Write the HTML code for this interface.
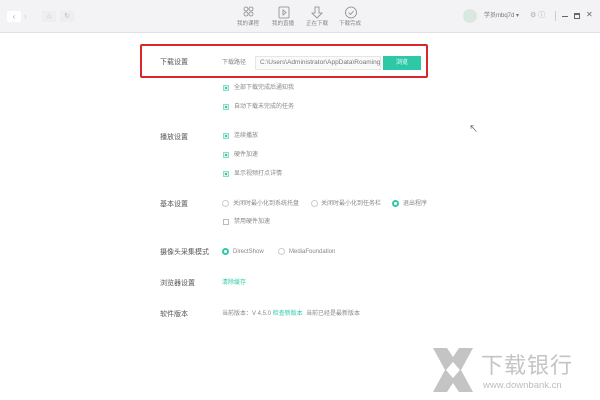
<!DOCTYPE html>
<html><head><meta charset="utf-8"><style>
*{margin:0;padding:0;box-sizing:border-box}
body{width:600px;height:400px;background:#fff;position:relative;overflow:hidden;font-family:"Liberation Sans","Noto Sans CJK SC",sans-serif;color:#666}
.a{position:absolute;white-space:nowrap}
.hdr{position:absolute;left:0;top:0;width:600px;height:33px;background:#f3f3f5;border-bottom:1px solid #e2e2e4}
.s{font-size:6px;color:#888;line-height:8px}
.lab{font-size:7px;color:#555;line-height:9px}
.cb{position:absolute;width:6px;height:6px;background:#d6f3ee;border:1px solid #8ddccb}
.cb::after{content:"";position:absolute;left:1px;top:1px;width:2px;height:2px;background:#2dc9a7}
.rd{position:absolute;width:7px;height:7px;border-radius:50%;border:1px solid #ccc}
.rd.on{border:2px solid #2dc9a7}
.g{color:#2dc9a7}
</style></head><body>
<div class="hdr"></div>
<div class="a" style="left:7px;top:11px;width:14px;height:11px;background:#fff;border-radius:2px;font-size:8px;color:#aaa;text-align:center;line-height:11px">‹</div>
<div class="a" style="left:24px;top:11px;font-size:8px;color:#ccc;line-height:11px">›</div>
<div class="a" style="left:42px;top:11px;width:14px;height:11px;background:#eee;font-size:7px;color:#bbb;text-align:center;line-height:11px">⌂</div>
<div class="a" style="left:60px;top:11px;width:14px;height:11px;background:#eee;font-size:7px;color:#bbb;text-align:center;line-height:11px">↻</div>
<svg class="a" style="left:243px;top:6px" width="120" height="14" fill="none" stroke="#888" stroke-width="0.8">
<circle cx="3" cy="3" r="2"/><circle cx="8" cy="3" r="2"/><circle cx="3" cy="8" r="2"/><circle cx="8" cy="8" r="2"/>
<rect x="36" y="1" width="10" height="11" rx="1"/><path d="M40 4v5l3-2.5z"/>
<path d="M72 1h4v6h3l-5 5-5-5h3z"/>
<circle cx="108" cy="6.5" r="5.5"/><path d="M105.5 6.5l2 2 3-3.5"/>
</svg>
<div class="a s" style="left:237px;top:20px;font-size:5.5px">我的课程</div>
<div class="a s" style="left:272px;top:20px;font-size:5.5px">我的直播</div>
<div class="a s" style="left:306px;top:20px;font-size:5.5px">正在下载</div>
<div class="a s" style="left:339px;top:20px;font-size:5.5px">下载完成</div>
<div class="a" style="left:463px;top:9px;width:14px;height:14px;border-radius:50%;background:#dbe8df"></div>
<div class="a s" style="left:484px;top:12px;font-size:6px;color:#777">学员mbq7d ▾</div>
<div class="a s" style="left:530px;top:12px;font-size:7px;color:#aaa">⚙ ⓘ</div>
<div class="a" style="left:555px;top:11px;width:1px;height:10px;background:#ccc"></div>
<div class="a" style="left:562px;top:16px;width:6px;height:1px;background:#666"></div>
<div class="a" style="left:574px;top:13px;width:6px;height:6px;border:1px solid #666;border-top-width:2px"></div>
<div class="a" style="left:586px;top:10px;font-size:8px;color:#666">✕</div>

<div class="a" style="left:140px;top:44px;width:288px;height:34px;border:2px solid #d8262b;border-radius:2px"></div>
<div class="a lab" style="left:160px;top:58px">下载设置</div>
<div class="a s" style="left:222px;top:59px">下载路径</div>
<div class="a" style="left:255px;top:56px;width:126px;height:14px;border:1px solid #e6e6e6;background:#fafafa;font-size:6.5px;color:#777;line-height:12px;padding-left:4px;overflow:hidden">C:\Users\Administrator\AppData\Roaming\</div>
<div class="a" style="left:383px;top:56px;width:38px;height:14px;background:#2dc9a7;color:#fff;font-size:6px;text-align:center;line-height:14px">浏览</div>

<div class="cb" style="left:223px;top:85px"></div><div class="a s" style="left:234px;top:84px">全部下载完成后通知我</div>
<div class="cb" style="left:223px;top:104px"></div><div class="a s" style="left:234px;top:103px">自动下载未完成的任务</div>
<div class="a lab" style="left:160px;top:133px">播放设置</div>
<div class="cb" style="left:223px;top:133px"></div><div class="a s" style="left:234px;top:132px">连续播放</div>
<div class="cb" style="left:223px;top:152px"></div><div class="a s" style="left:234px;top:151px">硬件加速</div>
<div class="cb" style="left:223px;top:171px"></div><div class="a s" style="left:234px;top:170px">显示视频打点详情</div>

<div class="a lab" style="left:160px;top:200px">基本设置</div>
<div class="rd" style="left:222px;top:200px"></div><div class="a s" style="left:233px;top:200px">关闭时最小化到系统托盘</div>
<div class="rd" style="left:311px;top:200px"></div><div class="a s" style="left:321px;top:200px">关闭时最小化到任务栏</div>
<div class="rd on" style="left:392px;top:200px"></div><div class="a s" style="left:403px;top:200px">退出程序</div>
<div class="a" style="left:223px;top:219px;width:6px;height:6px;border:1px solid #bbb"></div><div class="a s" style="left:234px;top:218px">禁用硬件加速</div>

<div class="a lab" style="left:160px;top:248px">摄像头采集模式</div>
<div class="rd on" style="left:222px;top:248px"></div><div class="a s" style="left:233px;top:248px">DirectShow</div>
<div class="rd" style="left:278px;top:248px"></div><div class="a s" style="left:289px;top:248px">MediaFoundation</div>

<div class="a lab" style="left:160px;top:279px">浏览器设置</div>
<div class="a s g" style="left:222px;top:279px">清除缓存</div>
<div class="a lab" style="left:160px;top:310px">软件版本</div>
<div class="a s" style="left:222px;top:310px">当前版本：V 4.5.0 <span class="g">检查新版本</span>&nbsp; 当前已经是最新版本</div>

<div class="a" style="left:469px;top:122px;font-size:9px;color:#555">↖</div>

<svg class="a" style="left:433px;top:348px" width="40" height="44"><path d="M0 0h14l6 9 6-9h14l-12 22 12 22h-14l-6-9-6 9h-14l12-22z" fill="#c4c4c4"/><path d="M20 14l7 8-7 8-7-8z" fill="#fff"/></svg>
<div class="a" style="left:481px;top:348px;font-size:22px;color:#c4c4c4;letter-spacing:1px">下载银行</div>
<div class="a" style="left:483px;top:380px;font-size:9.5px;color:#bdbdbd">www.downbank.cn</div>
</body></html>
